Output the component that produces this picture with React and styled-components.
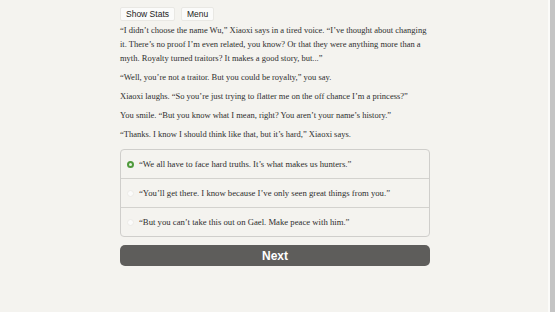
import React from "react";
import styled, { createGlobalStyle } from "styled-components";

const Global = createGlobalStyle`
  html, body { margin: 0; padding: 0; background: #f4f3ef; }
  body { width: 555px; height: 312px; overflow: hidden; }
`;

const Page = styled.div`
  display: flex;
  width: 555px;
  height: 312px;
  background: #f4f3ef;
`;

const Main = styled.div`
  flex: 1;
  display: flex;
  justify-content: center;
`;

const Edge = styled.div`
  width: 7px;
  display: flex;
`;

const EdgeLine = styled.div`
  width: ${(p) => p.w}px;
  background: ${(p) => p.c};
`;

const Column = styled.div`
  width: 310px;
  margin-left: 2px;
  padding-top: 7px;
  font-family: "Liberation Serif", "DejaVu Serif", serif;
  color: #2e2e2e;
`;

const Toolbar = styled.div`
  display: flex;
  gap: 6px;
  margin-bottom: 2px;
`;

const TopButton = styled.button`
  font-family: "Liberation Sans", Arial, sans-serif;
  font-size: 8.5px;
  color: #222;
  background: #fbfbfa;
  border: 1px solid #e9e8e4;
  border-radius: 2px;
  height: 14px;
  padding: 0 5px;
  line-height: 12px;
`;

const Para = styled.p`
  margin: 0 0 5px;
  font-size: 8.5px;
  line-height: 14px;
`;

const Choices = styled.div`
  margin-top: 8px;
  border: 1px solid #cfcecb;
  border-radius: 4px;
  display: flex;
  flex-direction: column;
`;

const Choice = styled.label`
  display: flex;
  align-items: center;
  gap: 5px;
  height: 28px;
  padding-left: 6px;
  font-size: 8.7px;
  border-top: ${(p) => (p.first ? "none" : "1px solid #d3d2ce")};
`;

const Radio = styled.span`
  width: 7px;
  height: 7px;
  border-radius: 50%;
  box-sizing: border-box;
  flex: none;
  ${(p) =>
    p.checked
      ? "border: 2px solid #4f9a3c; background: #e8f2e2;"
      : "border: 1px solid #ecebe7; background: #fbfbfa;"}
`;

const NextButton = styled.button`
  margin-top: 8px;
  width: 100%;
  height: 21px;
  border: none;
  border-radius: 5px;
  background: #5e5d5b;
  color: #fff;
  font-family: "Liberation Sans", Arial, sans-serif;
  font-weight: bold;
  font-size: 12px;
  padding: 0;
`;

const paras = [
  "\u201CI didn\u2019t choose the name Wu,\u201D Xiaoxi says in a tired voice. \u201CI\u2019ve thought about changing it. There\u2019s no proof I\u2019m even related, you know? Or that they were anything more than a myth. Royalty turned traitors? It makes a good story, but...\u201D",
  "\u201CWell, you\u2019re not a traitor. But you could be royalty,\u201D you say.",
  "Xiaoxi laughs. \u201CSo you\u2019re just trying to flatter me on the off chance I\u2019m a princess?\u201D",
  "You smile. \u201CBut you know what I mean, right? You aren\u2019t your name\u2019s history.\u201D",
  "\u201CThanks. I know I should think like that, but it\u2019s hard,\u201D Xiaoxi says.",
];

const choices = [
  "\u201CWe all have to face hard truths. It\u2019s what makes us hunters.\u201D",
  "\u201CYou\u2019ll get there. I know because I\u2019ve only seen great things from you.\u201D",
  "\u201CBut you can\u2019t take this out on Gael. Make peace with him.\u201D",
];

export default function App() {
  return (
    <Page>
      <Global />
      <Main>
        <Column>
          <Toolbar>
            <TopButton>Show Stats</TopButton>
            <TopButton>Menu</TopButton>
          </Toolbar>
          {paras.map((t, i) => (
            <Para key={i}>{t}</Para>
          ))}
          <Choices>
            {choices.map((c, i) => (
              <Choice key={i} first={i === 0}>
                <Radio checked={i === 0} />
                {c}
              </Choice>
            ))}
          </Choices>
          <NextButton>Next</NextButton>
        </Column>
      </Main>
      <Edge>
        <EdgeLine w={2} c="#fbfbf9" />
        <EdgeLine w={5} c="#c4c4c4" />
      </Edge>
    </Page>
  );
}
